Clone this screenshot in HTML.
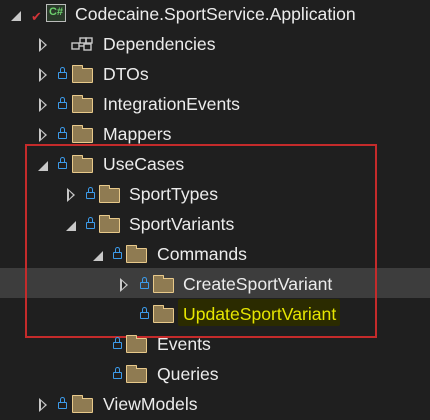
<!DOCTYPE html><html><head><style>
body{margin:0;width:430px;height:418px;background:#1f1f1f;position:relative;overflow:hidden;font-family:"Liberation Sans",sans-serif;font-size:17.6px;color:#ececec}
.r{position:absolute;height:30px;left:0;width:430px}
.t{position:absolute;top:4px;line-height:20px;white-space:nowrap}
.a{position:absolute;top:9px;width:0;height:0}
.ac{border-left:8px solid #c8c8c8;border-top:7px solid transparent;border-bottom:7px solid transparent;top:8px}
.ac::after{content:"";position:absolute;left:-6.5px;top:-4px;border-left:4px solid #1f1f1f;border-top:4px solid transparent;border-bottom:4px solid transparent}
.ae{border-right:10px solid #c8c8c8;border-top:10px solid transparent;top:11px}
.l{position:absolute;top:12px;width:9px;height:7px;border:1.5px solid #3c9bea;border-radius:1px;box-sizing:border-box}
.l::before{content:"";position:absolute;left:0.5px;top:-6px;width:5px;height:6px;border:1.5px solid #3c9bea;border-bottom:none;border-radius:3px 3px 0 0;box-sizing:border-box}
.f{position:absolute;top:8px;width:21px;height:15px;background:#8f7b52;border:1.5px solid #e8c98a;box-sizing:border-box;border-radius:1px}
.f::before{content:"";position:absolute;left:-1.5px;top:-4px;width:9px;height:3px;background:#8f7b52;border:1.5px solid #e8c98a;border-bottom:none;border-radius:1px 1px 0 0}
</style></head><body>
<div style="position:absolute;left:0;top:268px;width:430px;height:30px;background:#3d3d3d"></div>
<div style="position:absolute;left:178px;top:299px;width:162px;height:27px;background:#2b2b00;border-radius:2px"></div>
<div style="position:absolute;left:25px;top:144px;width:352px;height:194px;border:2px solid #c42b2b;box-sizing:border-box"></div>

<div class="r" style="top:0"><div class="a ae" style="left:11px"></div>
<div style="position:absolute;left:31px;top:9px;color:#d13438;font-size:13px">✔</div>
<div style="position:absolute;left:46px;top:4px;width:20px;height:18px;border:1.5px solid #bbb;background:#2a3a2a;box-sizing:border-box;color:#6fd36f;font-size:11px;font-weight:bold;line-height:15px;text-align:center">C#</div>
<div class="t" style="left:75px">Codecaine.SportService.Application</div></div>

<div class="r" style="top:30px"><div class="a ac" style="left:39px"></div>
<svg style="position:absolute;left:71px;top:6px" width="24" height="16" viewBox="0 0 24 16" fill="none" stroke="#c8c8c8" stroke-width="1.4"><rect x="1" y="7" width="7" height="6"/><rect x="9" y="2" width="6" height="5"/><rect x="15" y="2" width="6" height="5"/><rect x="13" y="8" width="7" height="6"/><path d="M8 10h5"/></svg>
<div class="t" style="left:103px">Dependencies</div></div>

<div class="r" style="top:60px"><div class="a ac" style="left:39px"></div><div class="l" style="left:58px"></div><div class="f" style="left:72px"></div><div class="t" style="left:103px">DTOs</div></div>
<div class="r" style="top:90px"><div class="a ac" style="left:39px"></div><div class="l" style="left:58px"></div><div class="f" style="left:72px"></div><div class="t" style="left:103px">IntegrationEvents</div></div>
<div class="r" style="top:120px"><div class="a ac" style="left:39px"></div><div class="l" style="left:58px"></div><div class="f" style="left:72px"></div><div class="t" style="left:103px">Mappers</div></div>
<div class="r" style="top:150px"><div class="a ae" style="left:38px"></div><div class="l" style="left:58px"></div><div class="f" style="left:72px"></div><div class="t" style="left:103px">UseCases</div></div>
<div class="r" style="top:180px"><div class="a ac" style="left:67px"></div><div class="l" style="left:86px"></div><div class="f" style="left:99px"></div><div class="t" style="left:129px">SportTypes</div></div>
<div class="r" style="top:210px"><div class="a ae" style="left:66px"></div><div class="l" style="left:86px"></div><div class="f" style="left:99px"></div><div class="t" style="left:129px">SportVariants</div></div>
<div class="r" style="top:240px"><div class="a ae" style="left:93px"></div><div class="l" style="left:113px"></div><div class="f" style="left:126px"></div><div class="t" style="left:157px">Commands</div></div>
<div class="r" style="top:270px"><div class="a ac" style="left:120px"></div><div class="l" style="left:140px"></div><div class="f" style="left:153px"></div><div class="t" style="left:183px">CreateSportVariant</div></div>
<div class="r" style="top:300px"><div class="l" style="left:140px"></div><div class="f" style="left:153px"></div><div class="t" style="left:183px;color:#e6e600">UpdateSportVariant</div></div>
<div class="r" style="top:330px"><div class="l" style="left:113px"></div><div class="f" style="left:126px"></div><div class="t" style="left:157px">Events</div></div>
<div class="r" style="top:360px"><div class="l" style="left:113px"></div><div class="f" style="left:126px"></div><div class="t" style="left:157px">Queries</div></div>
<div class="r" style="top:390px"><div class="a ac" style="left:39px"></div><div class="l" style="left:58px"></div><div class="f" style="left:72px"></div><div class="t" style="left:103px">ViewModels</div></div>
</body></html>
